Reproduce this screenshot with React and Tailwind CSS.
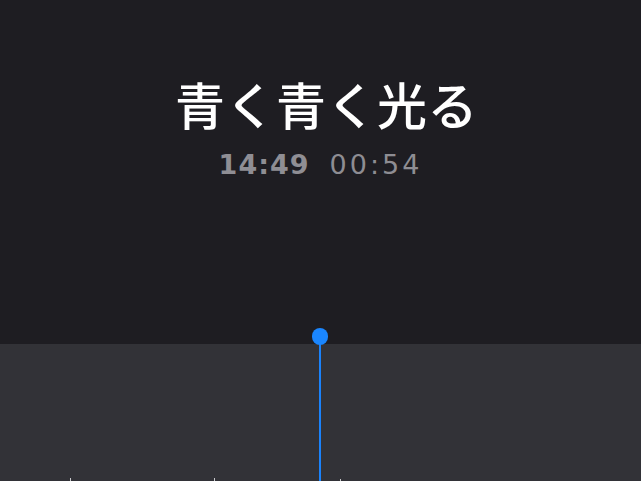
export default function App() {
  const ticks = [
    { x: 70, h: 'h-[3px]' },
    { x: 214, h: 'h-[3px]' },
    { x: 340, h: 'h-[2px]' },
  ];

  return (
    <div className="flex flex-col w-[641px] h-[481px] overflow-hidden bg-[#1e1d22] font-['DejaVu_Sans','Noto_Sans_CJK_JP',sans-serif]">
      {/* ── Title block ─────────────────────────────────────────── */}
      <div className="h-[344px] flex flex-col items-center pt-[78px]">
        <h1 className="pl-[12px] text-[50px] leading-none font-medium text-white font-['Noto_Sans_CJK_JP',sans-serif] tracking-[0.5px]">
          青く青く光る
        </h1>
        <div className="flex items-center gap-[20px] mt-[23px] text-[27px] leading-none text-[#8e8d93]">
          <span className="font-bold tracking-[1px] text-[#8f8e94]">14:49</span>
          <span className="font-normal tracking-[3px]">00:54</span>
        </div>
      </div>

      {/* ── Timeline ────────────────────────────────────────────── */}
      <div className="relative flex-1 bg-[#323237]">
        {ticks.map((t) => (
          <span
            key={t.x}
            className={`absolute bottom-0 w-px bg-[#c9c9cc] ${t.h}`}
            style={{ left: t.x }}
          />
        ))}

        {/* playhead */}
        <div className="absolute left-[319px] top-[-8px] bottom-0 w-[2px] bg-[#1a82fb]" />
        <div className="absolute left-[312px] top-[-16px] w-[16px] h-[17px] rounded-full bg-[#1a86ff]" />
      </div>
    </div>
  );
}
